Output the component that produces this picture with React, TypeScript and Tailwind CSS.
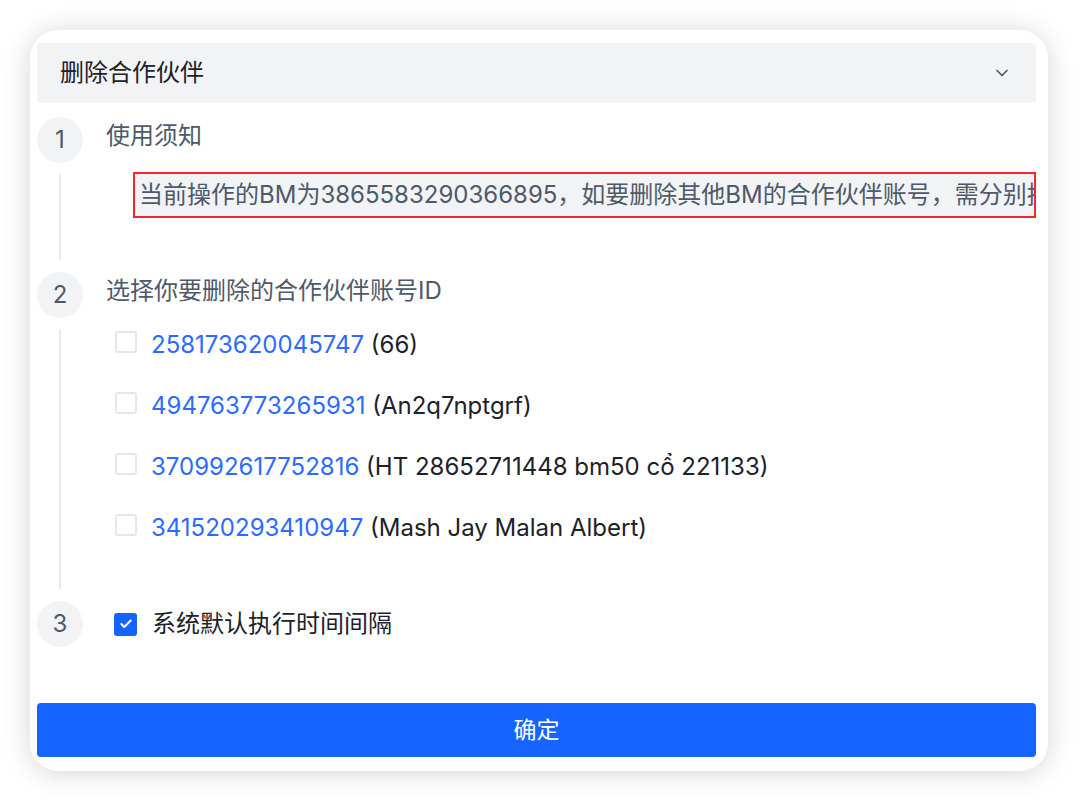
import { Check, ChevronDown } from 'lucide-react'

const FONT = { fontFamily: '"Inter", "Noto Sans CJK SC", sans-serif' }

const PARTNERS = [
  { id: '258173620045747', name: '66' },
  { id: '494763773265931', name: 'An2q7nptgrf' },
  { id: '370992617752816', name: 'HT 28652711448 bm50 cổ 221133' },
  { id: '341520293410947', name: 'Mash Jay Malan Albert' },
]

/* ── Step marker: numbered circle + connector line ───────────────────── */
function Marker({ n, line }: { n: number; line?: boolean }) {
  return (
    <div className="flex flex-col items-center w-[46px] shrink-0">
      <div className="w-[46px] h-[46px] rounded-full bg-[#f2f3f5] flex items-center justify-center text-[24px] text-[#4e5969]">
        {n}
      </div>
      {line && <div className="flex-1 w-[2px] bg-[#e9eaee] mt-[11px] mb-[12px]" />}
    </div>
  )
}

export default function App() {
  return (
    <div className="w-[1080px] h-[802px] bg-white pt-[30px] pl-[30px]" style={FONT}>
      <div className="w-[1018px] h-[741px] bg-white rounded-[28px] shadow-[0_2px_28px_rgba(0,0,0,0.17)] pt-[13px] pl-[7px] pr-[12px] pb-[14px] flex flex-col">
        {/* Header */}
        <div className="h-[60px] rounded-[4px] bg-[#f2f3f5] flex items-center justify-between pl-[23px] pr-[24px]">
          <span className="text-[24px] text-[#1d2129]">删除合作伙伴</span>
          <ChevronDown className="w-[20px] h-[20px] text-[#4e5969]" strokeWidth={2} />
        </div>

        {/* Step 1 */}
        <div className="flex mt-[14px]">
          <Marker n={1} line />
          <div className="flex-1 min-w-0 pl-[23px] pb-[54px]">
            <div className="h-[38px] flex items-center text-[24px] text-[#4e5969]">使用须知</div>
            <div className="ml-[27px] mt-[17px] h-[46px] border-2 border-[#f2262f] bg-[#f2f3f5] flex items-center pl-[4px] overflow-hidden whitespace-nowrap text-[24px] text-[#4e5969]">
              当前操作的BM为3865583290366895，如要删除其他BM的合作伙伴账号，需分别执行
            </div>
          </div>
        </div>

        {/* Step 2 */}
        <div className="flex">
          <Marker n={2} line />
          <div className="flex-1 min-w-0 pl-[23px] pb-[53px]">
            <div className="h-[38px] flex items-center text-[24px] text-[#4e5969]">选择你要删除的合作伙伴账号ID</div>
            <div className="flex flex-col gap-[21px] mt-[15px] ml-[9px]">
              {PARTNERS.map(p => (
                <label key={p.id} className="h-[40px] flex items-center gap-[14px] text-[24px]">
                  <span className="w-[22px] h-[22px] rounded-[3px] border-2 border-[#e5e6eb] bg-white shrink-0 -mt-[6px]" />
                  <span>
                    <span className="text-[#2b6bff]">{p.id}</span>
                    <span className="text-[#1d2129]"> ({p.name})</span>
                  </span>
                </label>
              ))}
            </div>
          </div>
        </div>

        {/* Step 3 */}
        <div className="flex">
          <Marker n={3} />
          <div className="flex-1 min-w-0 pl-[31px] flex items-center gap-[15px]">
            <span className="w-[23px] h-[23px] rounded-[3px] bg-[#1664ff] flex items-center justify-center shrink-0">
              <Check className="w-[14px] h-[14px] text-white" strokeWidth={3.5} />
            </span>
            <span className="text-[24px] text-[#1d2129]">系统默认执行时间间隔</span>
          </div>
        </div>

        <div className="flex-1" />

        {/* Confirm */}
        <button className="h-[54px] rounded-[4px] bg-[#1664ff] text-white text-[23px]">确定</button>
      </div>
    </div>
  )
}
